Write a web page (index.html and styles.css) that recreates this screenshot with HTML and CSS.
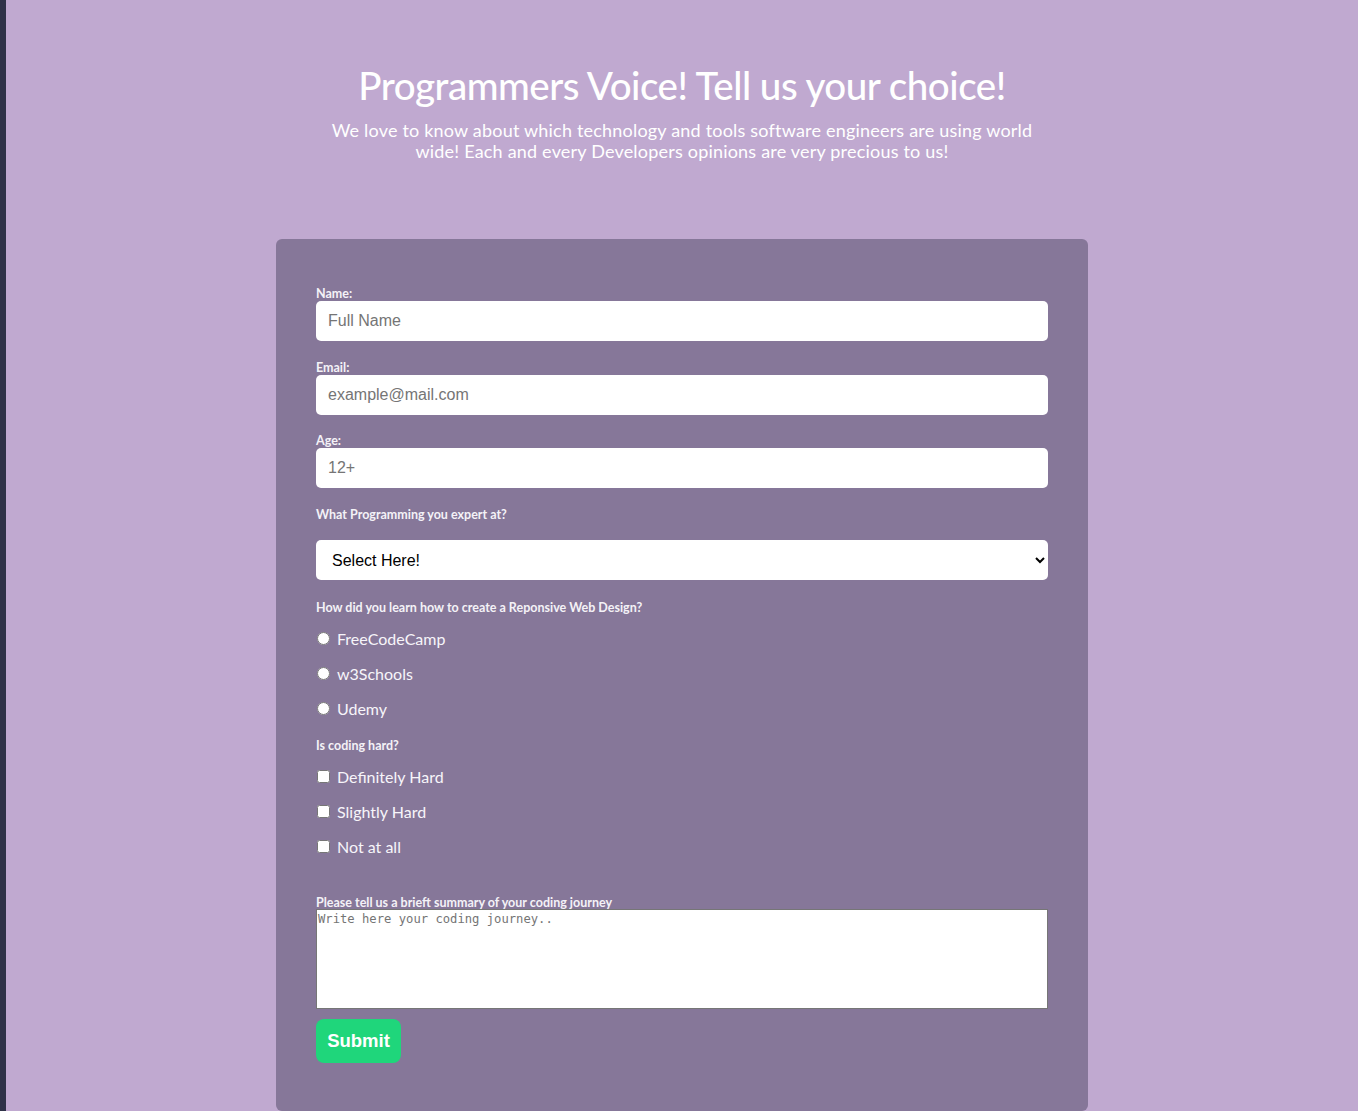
FILE: index.html
```html
<!DOCTYPE html>
<html lang="en">
<head>
<meta charset="utf-8">
<title>Programmers Voice Survey</title>
<link rel="stylesheet" href="styles.css">
</head>
<body>
<main class="page">
  <header class="header">
    <h1 id="title" class="title">Programmers Voice! Tell us your choice!</h1>
    <p id="description" class="description">We love to know about which technology and tools software engineers are using world wide! Each and every Developers opinions are very precious to us!</p>
  </header>
  <form id="survey-form" class="card">
    <div class="field">
      <label class="label" for="name">Name:</label>
      <input class="input" id="name" type="text" placeholder="Full Name">
    </div>
    <div class="field">
      <label class="label" for="email">Email:</label>
      <input class="input" id="email" type="email" placeholder="example@mail.com">
    </div>
    <div class="field">
      <label class="label" for="number">Age:</label>
      <input class="input" id="number" type="number" placeholder="12+">
    </div>
    <div class="field">
      <label class="label label-q" for="dropdown">What Programming you expert at?</label>
      <select class="select" id="dropdown">
        <option>Select Here!</option>
        <option>JavaScript</option>
        <option>Python</option>
        <option>Java</option>
      </select>
    </div>
    <div class="group">
      <p class="label">How did you learn how to create a Reponsive Web Design?</p>
      <div class="options">
        <label class="option"><input type="radio" name="learn" value="fcc"><span>FreeCodeCamp</span></label>
        <label class="option"><input type="radio" name="learn" value="w3"><span>w3Schools</span></label>
        <label class="option"><input type="radio" name="learn" value="udemy"><span>Udemy</span></label>
      </div>
    </div>
    <div class="group">
      <p class="label">Is coding hard?</p>
      <div class="options">
        <label class="option"><input type="checkbox" value="def"><span>Definitely Hard</span></label>
        <label class="option"><input type="checkbox" value="slight"><span>Slightly Hard</span></label>
        <label class="option"><input type="checkbox" value="not"><span>Not at all</span></label>
      </div>
    </div>
    <div class="group group-text">
      <label class="label label-text" for="journey">Please tell us a brieft summary of your coding journey</label>
      <textarea class="textarea" id="journey" placeholder="Write here your coding journey.."></textarea>
    </div>
    <button id="submit" class="submit" type="submit">Submit</button>
  </form>
</main>
</body>
</html>
```
FILE: styles.css
```css
* { box-sizing: border-box; }

html, body {
  margin: 0;
  padding: 0;
}

body {
  background: #c0a9d0;
  border-left: 6px solid #2f3248;
  font-family: "Lato", "Open Sans", sans-serif;
  color: #ffffff;
  min-height: 1111px;
}

.page {
  display: flex;
  flex-direction: column;
  align-items: center;
}

.header {
  text-align: center;
  padding-top: 62px;
  width: 740px;
}

.title {
  margin: 0;
  font-size: 38.5px;
  line-height: 46px;
  font-weight: 500;
  letter-spacing: -0.48px;
  color: #ffffff;
}

.description {
  margin: 12px auto 0;
  font-size: 18px;
  line-height: 21px;
  font-weight: 400;
  letter-spacing: 0.2px;
  color: #ffffff;
  max-width: 712px;
}

.card {
  width: 812px;
  margin-top: 77px;
  background: #867799;
  border-radius: 6px;
  padding: 48px 40px 48px;
}

.field {
  margin-bottom: 19.5px;
}

.label {
  display: block;
  margin: 0;
  font-size: 12.5px;
  line-height: 14px;
  font-weight: 700;
  letter-spacing: 0;
  color: #f4f2f7;
}

.label-q {
  margin-bottom: 18.5px;
}

.label-text {
  margin-bottom: -1px;
}

.input {
  display: block;
  width: 100%;
  height: 40px;
  border: none;
  border-radius: 5px;
  padding: 0 12px;
  font-family: "Liberation Sans", Arial, sans-serif;
  font-size: 16px;
  color: #333;
  background: #fff;
}

.input::placeholder {
  color: #757575;
}

.select {
  display: block;
  width: 100%;
  height: 40px;
  border: none;
  border-radius: 5px;
  padding: 0 12px;
  font-family: "Liberation Sans", Arial, sans-serif;
  font-size: 16px;
  color: #000;
  background: #fff;
}

.group {
  padding-top: 1.5px;
  margin-bottom: 11.5px;
}

.options {
  margin-top: 6px;
  display: flex;
  flex-direction: column;
}

.option {
  display: flex;
  align-items: center;
  height: 35px;
  font-size: 16px;
  color: #f7f5fa;
  letter-spacing: 0;
}

.option input {
  margin: 0 7px 0 1px;
  width: 13px;
  height: 13px;
}

.group-text {
  margin-top: 30px;
  margin-bottom: 0;
}

.textarea {
  display: block;
  width: 100%;
  height: 100px;
  margin: 0 0 10px;
  border: 1px solid #767676;
  border-radius: 0;
  padding: 2px 1px;
  font-family: "DejaVu Sans Mono", monospace;
  font-size: 12.2px;
  resize: none;
  background: #fff;
}

.textarea::placeholder {
  color: #757575;
}

.submit {
  display: block;
  width: 85px;
  height: 44px;
  border: none;
  border-radius: 8px;
  background: #1fd67b;
  color: #fff;
  font-family: "Liberation Sans", Arial, sans-serif;
  font-weight: 700;
  font-size: 18.5px;
  padding: 0;
  cursor: pointer;
}
```
